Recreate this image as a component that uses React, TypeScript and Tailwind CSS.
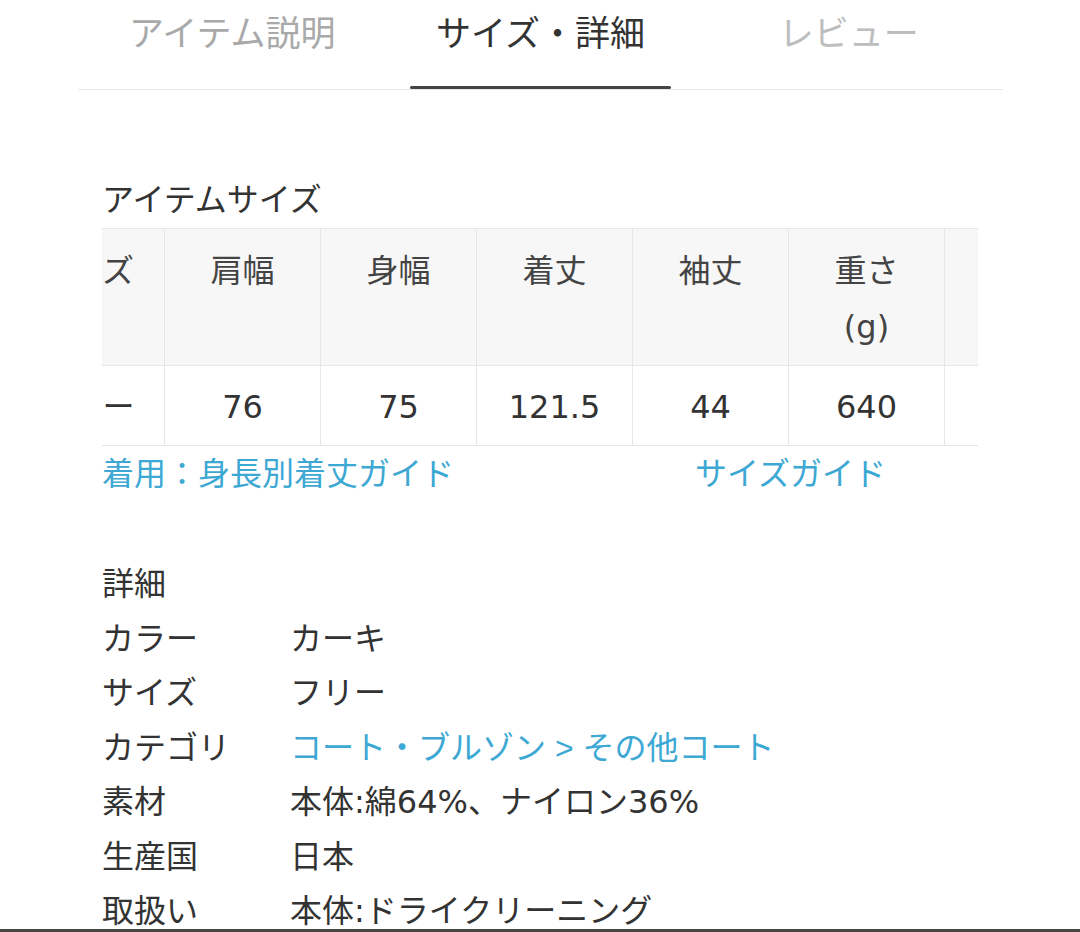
import React from "react";

const font = { fontFamily: '"DejaVu Sans", "Noto Sans CJK JP", sans-serif' };
const narrow = { fontFamily: '"Liberation Sans", "Noto Sans CJK JP", sans-serif' };

export default function App() {
  const headers: React.ReactNode[] = [
    "サイズ",
    "肩幅",
    "身幅",
    "着丈",
    "袖丈",
    <>
      重さ
      <br />
      (g)
    </>,
    "",
  ];
  const values = ["フリー", "76", "75", "121.5", "44", "640", ""];
  const details: [string, React.ReactNode, boolean][] = [
    ["カラー", "カーキ", false],
    ["サイズ", "フリー", false],
    [
      "カテゴリ",
      <>
        コート・ブルゾン<span style={narrow}> &gt; </span>その他コート
      </>,
      true,
    ],
    ["素材", "本体:綿64%、ナイロン36%", false],
    ["生産国", "日本", false],
    ["取扱い", "本体:ドライクリーニング", false],
  ];
  return (
    <div
      className="relative h-[932px] w-[1080px] overflow-hidden bg-white text-[#333]"
      style={font}
    >
      {/* Tabs */}
      <div className="ml-[78px] flex w-[925px] border-b border-[#e8e8e8]">
        {[
          ["アイテム説明", "text-[#a9a9a9]", false],
          ["サイズ・詳細", "text-[#333]", true],
          ["レビュー", "text-[#bdbdbd]", false],
        ].map(([label, color, active]) => (
          <div
            key={label as string}
            className="flex h-[89px] flex-1 flex-col items-center"
          >
            <div
              className={`mt-[12px] text-[35px] leading-[44px] ${color as string}`}
            >
              {label as string}
            </div>
            {active ? (
              <div className="mt-auto h-[3px] w-[261px] rounded-full bg-[#444]" />
            ) : null}
          </div>
        ))}
      </div>

      <div className="pl-[102px]">
        <div className="mt-[90px] text-[32px] leading-[40px] text-[#333]">
          アイテムサイズ
        </div>

        {/* Table */}
        <div className="mt-[8px] w-[876px] overflow-hidden">
          <div className="ml-[-93px] w-max">
            <div className="flex border-y border-[#e6e6e6] bg-[#f7f7f7]">
              {headers.map((h, i) => (
                <div
                  key={i}
                  className="box-border h-[136px] w-[156px] shrink-0 border-r border-[#e6e6e6] pt-[14px] text-center text-[32px] leading-[56px] text-[#444]"
                >
                  {h}
                </div>
              ))}
            </div>
            <div className="flex border-b border-[#e6e6e6] bg-white">
              {values.map((v, i) => (
                <div
                  key={i}
                  className="box-border flex h-[79px] w-[156px] shrink-0 items-center justify-center border-r border-[#e6e6e6] pt-[3px] text-[32px] text-[#333]"
                >
                  {v}
                </div>
              ))}
            </div>
          </div>
        </div>

        {/* Links */}
        <div className="mt-[8px] flex text-[32px] leading-[40px] text-[#3da8d3]">
          <span className="w-[593px]">着用：身長別着丈ガイド</span>
          <span>サイズガイド</span>
        </div>

        {/* Details */}
        <div className="mt-[63px] text-[32px] leading-[54.5px] text-[#333]">
          <div>詳細</div>
          {details.map(([k, v, link]) => (
            <div key={k} className="flex">
              <span className="w-[188px] shrink-0">{k}</span>
              <span className={link ? "text-[#3da8d3]" : ""}>{v}</span>
            </div>
          ))}
        </div>
      </div>

      <div className="absolute bottom-0 left-0 h-[3px] w-full bg-[#444]" />
    </div>
  );
}
